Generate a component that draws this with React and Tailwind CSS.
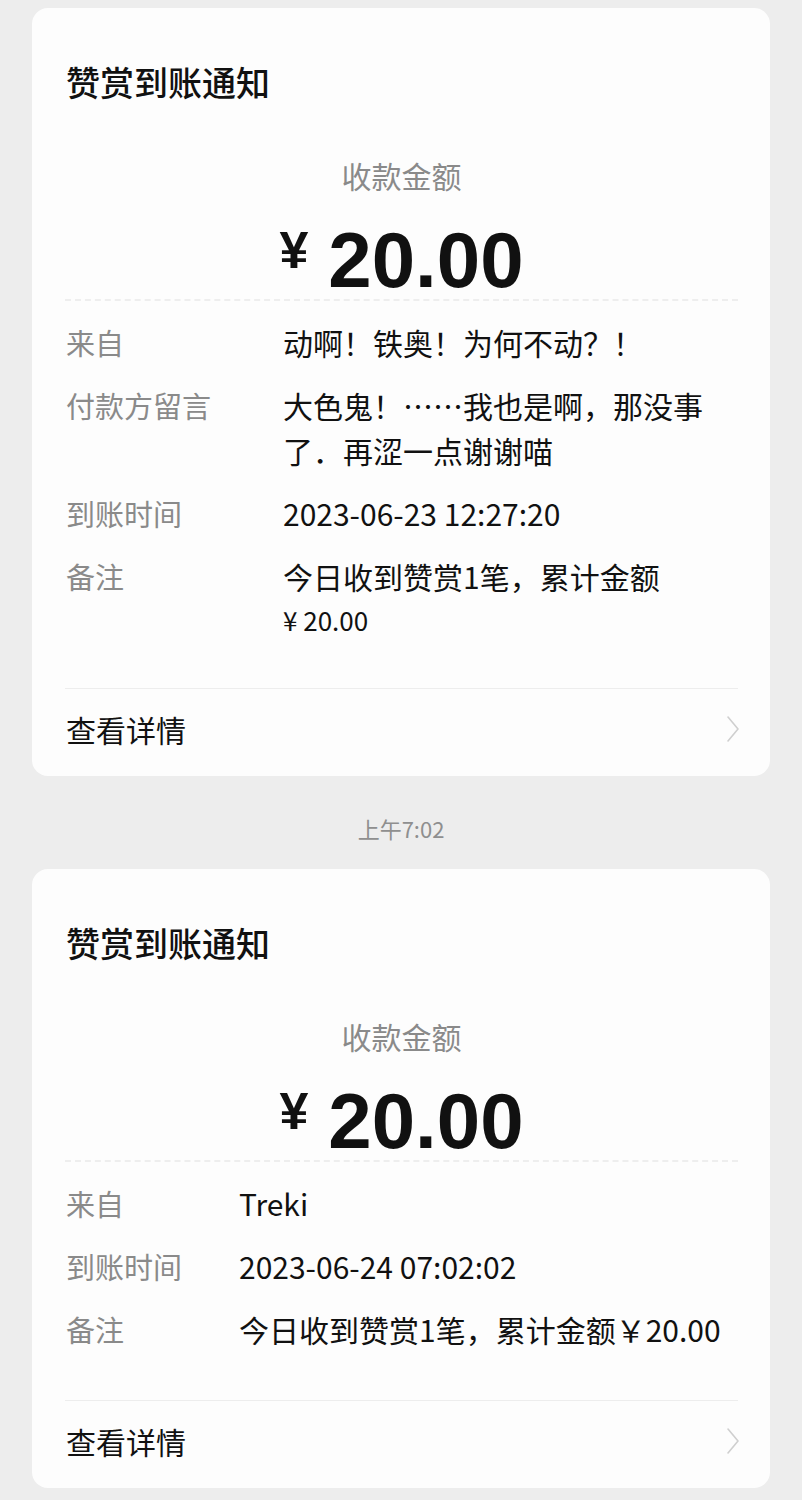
const cjk = { fontFamily: '"Noto Sans CJK SC", "Noto Sans", sans-serif' };
const num = { fontFamily: '"Liberation Sans", Arial, sans-serif' };

function Chevron() {
  return (
    <svg width="14" height="28" viewBox="0 0 14 28" fill="none">
      <path d="M2 2 L12 14 L2 26" stroke="#cfcfcf" strokeWidth="1.6" strokeLinecap="round" strokeLinejoin="round" />
    </svg>
  );
}

function RewardCard({ rows, labelWidth }) {
  return (
    <div className="bg-[#fdfdfd] rounded-[16px] pl-[33px] pr-[32px] pt-[54px]">
      {/* title */}
      <div className="text-[34px] leading-[40px] font-medium text-[#111] pl-[1px]">赞赏到账通知</div>

      {/* amount */}
      <div className="mt-[53px] text-center text-[30px] leading-[40px] text-[#8a8a8a]">收款金额</div>
      <div className="mt-[26px] flex justify-center items-start h-[78px]" style={num}>
        <span className="text-[52px] leading-none font-bold text-[#111] mt-[3px] mr-[20px]">¥</span>
        <span className="text-[78px] leading-none font-bold text-[#111]">20.00</span>
      </div>
      <div className="border-t-2 border-dashed border-[#eeeeee]" />

      {/* rows */}
      <div className="pt-[19px] pb-[48px] flex flex-col gap-[18px]">
        {rows.map((r) => (
          <div key={r.label} className="flex text-[29px] leading-[45px]">
            <div className={`${labelWidth} shrink-0 pl-[1px] text-[#8a8a8a]`}>{r.label}</div>
            <div className="flex-1 text-[30px] text-[#111]">
              {r.value.map((line, i) => (
                <div key={i} className="whitespace-nowrap">{line}</div>
              ))}
            </div>
          </div>
        ))}
      </div>

      {/* footer */}
      <div className="border-t border-[#ededed] h-[88px] pb-[8px] flex items-center justify-between">
        <span className="text-[30px] leading-[40px] text-[#111] pl-[1px]">查看详情</span>
        <span className="mr-[-2px]"><Chevron /></span>
      </div>
    </div>
  );
}

export default function App() {
  const first = [
    { label: "来自", value: ["动啊！铁奥！为何不动？！"] },
    { label: "付款方留言", value: ["大色鬼！……我也是啊，那没事", "了．再涩一点谢谢喵"] },
    { label: "到账时间", value: ["2023-06-23 12:27:20"] },
    {
      label: "备注",
      value: ["今日收到赞赏1笔，累计金额", <span className="block text-[26px] leading-[41px]">¥ 20.00</span>],
    },
  ];
  const second = [
    { label: "来自", value: ["Treki"] },
    { label: "到账时间", value: ["2023-06-24 07:02:02"] },
    { label: "备注", value: ["今日收到赞赏1笔，累计金额￥20.00"] },
  ];

  return (
    <div className="w-[802px] min-h-[1500px] bg-[#ededed] px-[32px] pt-[8px]" style={cjk}>
      <RewardCard rows={first} labelWidth="w-[218px]" />
      <div className="mt-[37px] mb-[26px] text-center text-[22px] leading-[30px] text-[#8f8f8f]">上午7:02</div>
      <RewardCard rows={second} labelWidth="w-[174px]" />
    </div>
  );
}
